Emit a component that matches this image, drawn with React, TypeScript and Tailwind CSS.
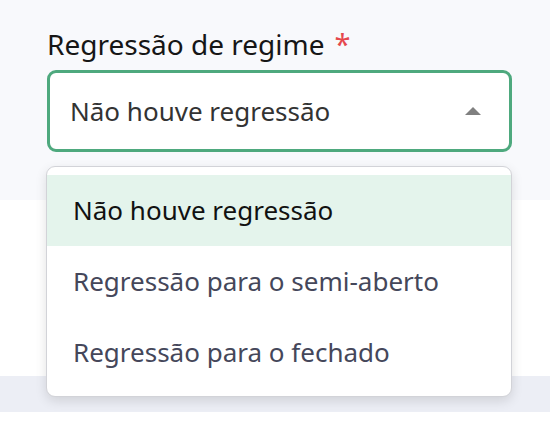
import React from "react";

const options = [
  "Não houve regressão",
  "Regressão para o semi-aberto",
  "Regressão para o fechado",
];

/* small grey caret shown on the right of the open select */
const Caret = () => (
  <svg width="18" height="10" viewBox="0 0 18 10" className="shrink-0">
    <path d="M1 9 L9 1 L17 9 Z" fill="#808080" />
  </svg>
);

const App = () => {
  const selected = options[0];

  return (
    <div
      className="relative w-[550px] h-[438px] overflow-hidden bg-white"
      style={{ fontFamily: '"Noto Sans", "Open Sans", sans-serif' }}
    >
      {/* field area */}
      <div className="h-[200px] bg-[#f8f9fc] pl-[47px] pr-[38px] pt-[25px]">
        <label className="flex items-center gap-[10px] text-[28px] leading-[38px] text-[#161616]">
          Regressão de regime
          <span className="text-[29px] text-[#e5484d]">*</span>
        </label>
        <div className="mt-[7px] flex h-[82px] items-center justify-between rounded-[9px] border-[3px] border-[#4ea97e] bg-white pl-[20px] pr-[27px]">
          <span className="text-[26px] text-[#333333]">{selected}</span>
          <Caret />
        </div>
      </div>

      {/* page rows behind the menu */}
      <div className="h-[176px] bg-white" />
      <div className="h-[36px] bg-[#eceef5]" />

      {/* open dropdown list */}
      <div className="absolute left-[46px] top-[166px] w-[466px] rounded-[9px] border border-[#d2d3d8] bg-white py-[8px] shadow-[0_4px_12px_rgba(0,0,0,0.12)]">
        {options.map((opt) => (
          <div
            key={opt}
            className={
              opt === selected
                ? "flex h-[71px] items-center bg-[#e4f4ec] pl-[26px] text-[26px] text-[#111111]"
                : "flex h-[71px] items-center pl-[26px] text-[26px] text-[#45475a]"
            }
          >
            {opt}
          </div>
        ))}
      </div>
    </div>
  );
};

export default App;
